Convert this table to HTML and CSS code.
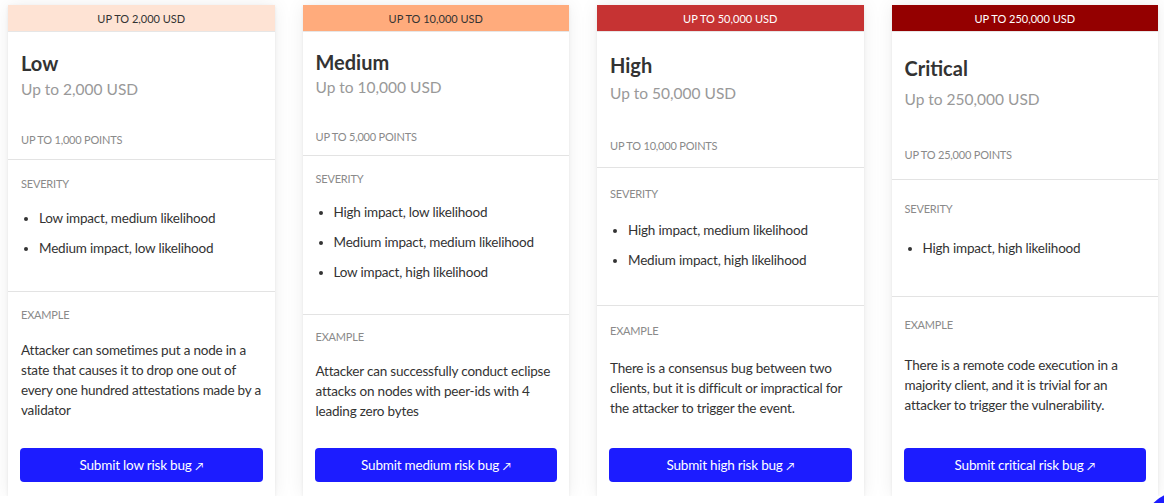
FILE: index.html
```html
<!DOCTYPE html>
<html lang="en">
<head>
<meta charset="utf-8">
<title>Bug bounty rewards</title>
<link rel="stylesheet" href="styles.css">
</head>
<body>
<div class="grid">
  <div class="card">
    <div class="band band-low">UP TO 2,000 USD</div>
    <div class="body">
      <h2 class="title">Low</h2>
      <div class="sub">Up to 2,000 USD</div>
      <div class="label points">UP TO 1,000 POINTS</div>
      <hr class="rule">
      <div class="label sev">SEVERITY</div>
      <ul class="list">
        <li>Low impact, medium likelihood</li>
        <li>Medium impact, low likelihood</li>
      </ul>
      <hr class="rule rule2">
      <div class="label ex">EXAMPLE</div>
      <p class="text">Attacker can sometimes put a node in a state that causes it to drop one out of every one hundred attestations made by a validator</p>
    </div>
    <a class="btn" href="#">Submit low risk bug <span class="arrow">↗</span></a>
  </div>

  <div class="card">
    <div class="band band-medium">UP TO 10,000 USD</div>
    <div class="body">
      <h2 class="title">Medium</h2>
      <div class="sub">Up to 10,000 USD</div>
      <div class="label points">UP TO 5,000 POINTS</div>
      <hr class="rule">
      <div class="label sev">SEVERITY</div>
      <ul class="list">
        <li>High impact, low likelihood</li>
        <li>Medium impact, medium likelihood</li>
        <li>Low impact, high likelihood</li>
      </ul>
      <hr class="rule rule2">
      <div class="label ex">EXAMPLE</div>
      <p class="text">Attacker can successfully conduct eclipse attacks on nodes with peer-ids with 4 leading zero bytes</p>
    </div>
    <a class="btn" href="#">Submit medium risk bug <span class="arrow">↗</span></a>
  </div>

  <div class="card">
    <div class="band band-high">UP TO 50,000 USD</div>
    <div class="body">
      <h2 class="title">High</h2>
      <div class="sub">Up to 50,000 USD</div>
      <div class="label points">UP TO 10,000 POINTS</div>
      <hr class="rule">
      <div class="label sev">SEVERITY</div>
      <ul class="list">
        <li>High impact, medium likelihood</li>
        <li>Medium impact, high likelihood</li>
      </ul>
      <hr class="rule rule2">
      <div class="label ex">EXAMPLE</div>
      <p class="text">There is a consensus bug between two clients, but it is difficult or impractical for the attacker to trigger the event.</p>
    </div>
    <a class="btn" href="#">Submit high risk bug <span class="arrow">↗</span></a>
  </div>

  <div class="card">
    <div class="band band-critical">UP TO 250,000 USD</div>
    <div class="body">
      <h2 class="title">Critical</h2>
      <div class="sub">Up to 250,000 USD</div>
      <div class="label points">UP TO 25,000 POINTS</div>
      <hr class="rule">
      <div class="label sev">SEVERITY</div>
      <ul class="list">
        <li>High impact, high likelihood</li>
      </ul>
      <hr class="rule rule2">
      <div class="label ex">EXAMPLE</div>
      <p class="text">There is a remote code execution in a majority client, and it is trivial for an attacker to trigger the vulnerability.</p>
    </div>
    <a class="btn" href="#">Submit critical risk bug <span class="arrow">↗</span></a>
  </div>
</div>
<div class="fab"></div>
</body>
</html>
```

FILE: styles.css
```css
html, body {
  margin: 0;
  padding: 0;
  background: #ffffff;
  overflow: hidden;
}

body {
  font-family: Lato, "Open Sans", sans-serif;
  color: #333333;
}

.grid {
  display: grid;
  grid-template-columns: repeat(4, 1fr);
  column-gap: 28px;
  padding: 5px 6px 0 8px;
  align-items: stretch;
}

.card {
  display: flex;
  flex-direction: column;
  background: #ffffff;
  box-shadow: 0 1px 3px rgba(0, 0, 0, 0.08), 0 0 18px rgba(0, 0, 0, 0.07);
}

.band {
  height: 27px;
  line-height: 27px;
  text-align: center;
  font-size: 11px;
  color: #333333;
  border-bottom: 1px solid #e6e6e6;
  box-sizing: border-box;
}

.band-low { background: #fee3d4; }
.band-medium { background: #ffab7c; }
.band-high { background: #c63333; color: #ffffff; }
.band-critical { background: #940000; color: #ffffff; }

.body {
  flex: 1;
  display: flex;
  flex-direction: column;
  justify-content: space-evenly;
}

.title {
  margin: 18px 13px 0;
  font-size: 20px;
  line-height: 24px;
  font-weight: 700;
  color: #333333;
}

.sub {
  margin: 1px 13px 0;
  font-size: 15.5px;
  line-height: 24px;
  color: #999999;
}

.label {
  margin: 0 13px;
  font-size: 11px;
  line-height: 16px;
  letter-spacing: -0.2px;
  color: #8a8a8a;
  text-transform: uppercase;
}

.points { margin-top: 30px; }

.rule {
  margin: 10px 0 0;
  border: 0;
  height: 1px;
  background: #e3e3e3;
}

.rule2 { margin-top: 32px; }

.sev { margin-top: 15px; }
.ex { margin-top: 14px; }

.list {
  margin: 15px 13px 0;
  padding-left: 18px;
  font-size: 13.5px;
  letter-spacing: -0.2px;
  line-height: 20px;
}

.list li + li { margin-top: 10px; }

.text {
  margin: 16px 13px 0;
  font-size: 13.5px;
  letter-spacing: -0.2px;
  line-height: 20px;
  color: #333333;
}

.btn {
  display: block;
  margin: 27px 12px 14px;
  height: 34px;
  line-height: 34px;
  border-radius: 4px;
  background: #1c1cff;
  color: #ffffff;
  text-align: center;
  font-size: 13.5px;
  letter-spacing: -0.2px;
  text-decoration: none;
}

.arrow {
  font-size: 11px;
}

.fab {
  position: fixed;
  left: 1140px;
  top: 490px;
  width: 90px;
  height: 90px;
  border-radius: 50%;
  background: #1c1cff;
}
```
